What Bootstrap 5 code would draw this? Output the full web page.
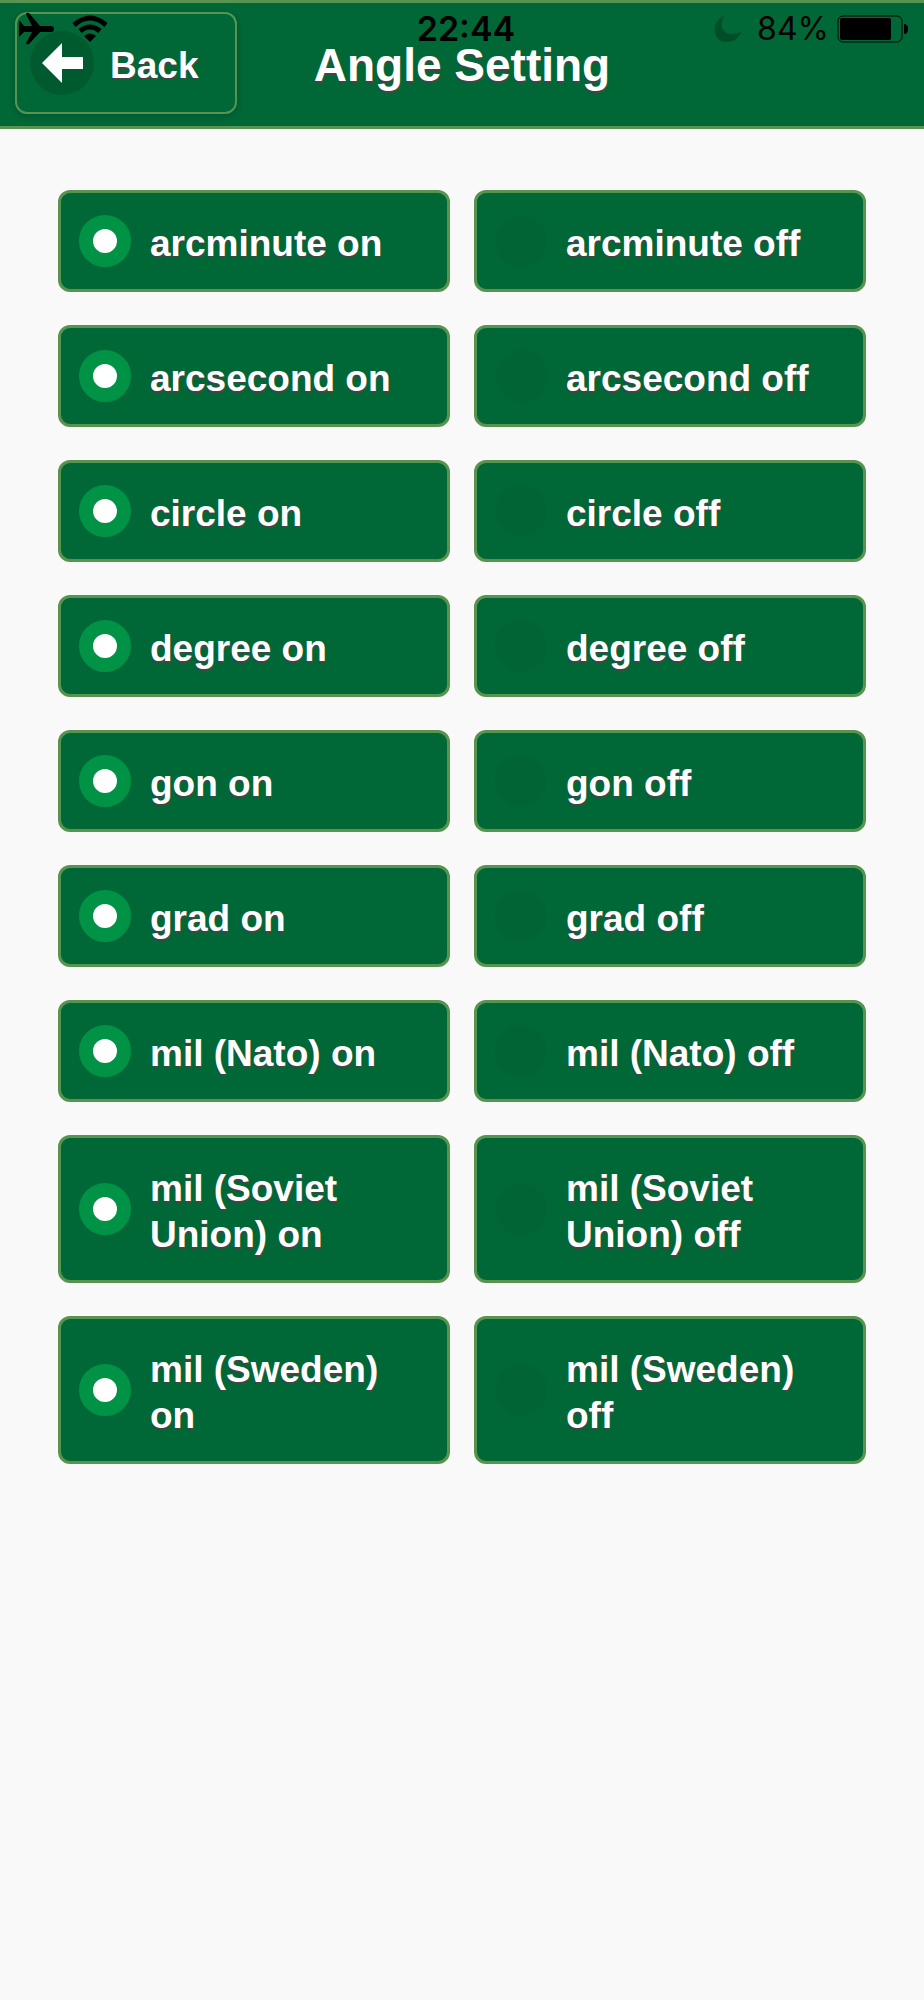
<!DOCTYPE html>
<html lang="en">
<head>
<meta charset="utf-8">
<meta name="viewport" content="width=device-width, initial-scale=1">
<title>Angle Setting</title>
<link rel="stylesheet" href="https://cdn.jsdelivr.net/npm/bootstrap@5.3.0/dist/css/bootstrap.min.css">
<style>
  :root { --panel: #006837; --edge: #58944f; --lit: #009245; }
  body { background: #f9f9f9; font-family: "Liberation Sans", Arial, sans-serif; }
  .topbar { background: var(--panel); border: solid var(--edge); border-width: 3px 0; display: grid; grid-template-columns: 1fr auto 1fr; align-items: center; padding: 9px 15px 12px; }
  .topbar h1 { font-size: 46px; line-height: 56px; padding-top: 4px; text-shadow: 0 2px 0 #444; }
  .back-btn { height: 102px; width: 222px; padding: 0 13px; gap: 16px; border: 2px solid var(--edge); border-radius: 12px; font-size: 37px; line-height: 46px; font-weight: 700; color: #fff; text-shadow: 0 2px 0 #444; box-shadow: 0 2px 8px rgba(0,0,0,.2); }
  .back-btn:hover { color: #fff; border-color: var(--edge); }
  .back-btn span { padding-top: 6px; }
  /* device status line, laid over the title bar */
  .status { display: grid; grid-template-columns: 1fr auto 1fr; align-items: center; height: 34px; top: 9px; padding: 0 15px 0 19px; pointer-events: none; color: #000; font-family: Inter, sans-serif; font-size: 34px; line-height: 34px; }
  .clock { font-weight: 600; }
  .charge { font-size: 32px; }
  .settings { padding: 61px 58px; display: grid; gap: 33px; }
  .pair { display: grid; grid-template-columns: 1fr 1fr; gap: 24px; }
  .choice { background: var(--panel); border: 3px solid var(--edge); border-radius: 12px; padding: 0 24px 0 18px; gap: 19px; }
  .choice span { padding: 28px 0 22px; color: #fff; font-size: 37px; line-height: 46px; font-weight: 700; text-shadow: 0 2px 0 #444; }
  .choice input { appearance: none; width: 52px; height: 52px; margin: 0; border-radius: 50%; background: #006435; }
  .choice input:checked { background: #fff; border: 14px solid var(--lit); }
</style>
</head>
<body>
<header class="topbar position-relative">
  <button type="button" class="btn back-btn d-flex align-items-center">
    <svg width="64" height="64" viewBox="0 0 64 64" aria-hidden="true"><circle cx="32" cy="32" r="32" fill="#005a2f"/><path fill="#fff" d="M12 32 32 12V26H53V38H32V52Z"/></svg>
    <span>Back</span>
  </button>
  <h1 class="mb-0 fw-bold text-white text-center">Angle Setting</h1>
  <div class="status position-absolute start-0 end-0">
    <div class="d-flex align-items-center">
      <svg width="35" height="34" viewBox="0 0 35 34" aria-label="Airplane mode"><path d="M0 9 1 9 5 14H13L7 2Q7 0 10 1L21 14H32Q35 14 35 17Q35 20 32 20H21L10 32Q7 33 7 31L13 20H5L1 24 0 25Z"/></svg>
      <svg class="ms-3" width="38" height="28" viewBox="0 0 38 28" aria-label="Wi-Fi"><g fill="none" stroke="#000" stroke-width="5"><path d="M4 10Q20-4 36 10"/><path d="M10 16Q20 8 30 16"/></g><path d="M14 21Q20 16 26 21L20 27Z"/></svg>
    </div>
    <div class="clock ms-1">22:44</div>
    <div class="d-flex align-items-center justify-content-end">
      <svg width="27" height="28" viewBox="0 0 27 28" aria-label="Do not disturb"><path fill="#004d2a" d="M10 1C-3 6-3 27 13 27C20 27 25 23 27 17C12 23 3 14 10 1Z"/></svg>
      <span class="charge ms-3">84%</span>
      <svg class="ms-2" width="72" height="28" viewBox="0 0 72 28" aria-label="Battery"><rect x="1" y="1" width="64" height="26" rx="5" fill="none" stroke="#000" stroke-width="1"/><rect x="3" y="3" width="51" height="22" rx="2"/><path d="M67 9Q71 9 71 14Q71 19 67 19Z"/></svg>
    </div>
  </div>
</header>

<main class="settings">
  <div class="pair" role="radiogroup" aria-label="arcminute">
    <label class="choice d-flex align-items-center"><input class="flex-shrink-0" type="radio" name="arcminute" checked><span>arcminute on</span></label>
    <label class="choice d-flex align-items-center"><input class="flex-shrink-0" type="radio" name="arcminute"><span>arcminute off</span></label>
  </div>
  <div class="pair" role="radiogroup" aria-label="arcsecond">
    <label class="choice d-flex align-items-center"><input class="flex-shrink-0" type="radio" name="arcsecond" checked><span>arcsecond on</span></label>
    <label class="choice d-flex align-items-center"><input class="flex-shrink-0" type="radio" name="arcsecond"><span>arcsecond off</span></label>
  </div>
  <div class="pair" role="radiogroup" aria-label="circle">
    <label class="choice d-flex align-items-center"><input class="flex-shrink-0" type="radio" name="circle" checked><span>circle on</span></label>
    <label class="choice d-flex align-items-center"><input class="flex-shrink-0" type="radio" name="circle"><span>circle off</span></label>
  </div>
  <div class="pair" role="radiogroup" aria-label="degree">
    <label class="choice d-flex align-items-center"><input class="flex-shrink-0" type="radio" name="degree" checked><span>degree on</span></label>
    <label class="choice d-flex align-items-center"><input class="flex-shrink-0" type="radio" name="degree"><span>degree off</span></label>
  </div>
  <div class="pair" role="radiogroup" aria-label="gon">
    <label class="choice d-flex align-items-center"><input class="flex-shrink-0" type="radio" name="gon" checked><span>gon on</span></label>
    <label class="choice d-flex align-items-center"><input class="flex-shrink-0" type="radio" name="gon"><span>gon off</span></label>
  </div>
  <div class="pair" role="radiogroup" aria-label="grad">
    <label class="choice d-flex align-items-center"><input class="flex-shrink-0" type="radio" name="grad" checked><span>grad on</span></label>
    <label class="choice d-flex align-items-center"><input class="flex-shrink-0" type="radio" name="grad"><span>grad off</span></label>
  </div>
  <div class="pair" role="radiogroup" aria-label="mil (Nato)">
    <label class="choice d-flex align-items-center"><input class="flex-shrink-0" type="radio" name="mil-nato" checked><span>mil (Nato) on</span></label>
    <label class="choice d-flex align-items-center"><input class="flex-shrink-0" type="radio" name="mil-nato"><span>mil (Nato) off</span></label>
  </div>
  <div class="pair" role="radiogroup" aria-label="mil (Soviet Union)">
    <label class="choice d-flex align-items-center"><input class="flex-shrink-0" type="radio" name="mil-soviet" checked><span>mil (Soviet Union) on</span></label>
    <label class="choice d-flex align-items-center"><input class="flex-shrink-0" type="radio" name="mil-soviet"><span>mil (Soviet Union) off</span></label>
  </div>
  <div class="pair" role="radiogroup" aria-label="mil (Sweden)">
    <label class="choice d-flex align-items-center"><input class="flex-shrink-0" type="radio" name="mil-sweden" checked><span>mil (Sweden) on</span></label>
    <label class="choice d-flex align-items-center"><input class="flex-shrink-0" type="radio" name="mil-sweden"><span>mil (Sweden) off</span></label>
  </div>
</main>
<script src="https://cdn.jsdelivr.net/npm/bootstrap@5.3.0/dist/js/bootstrap.bundle.min.js"></script>
</body>
</html>
